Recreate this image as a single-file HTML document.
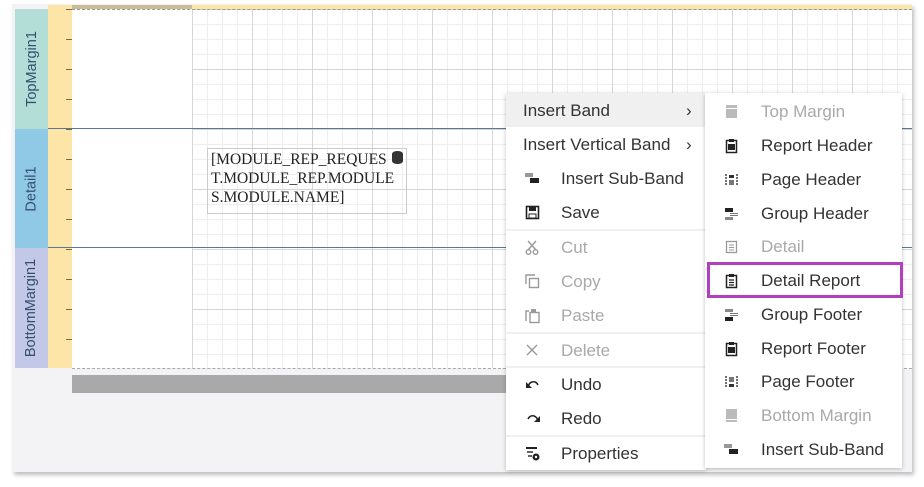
<!DOCTYPE html>
<html><head><meta charset="utf-8"><style>
*{margin:0;padding:0;box-sizing:border-box}
body{width:924px;height:487px;background:#fff;position:relative;overflow:hidden;font-family:"Liberation Sans",sans-serif}
.frame{position:absolute;left:12px;top:4px;width:900px;height:468px;background:#f3f3f5;box-shadow:2px 3px 4px rgba(0,0,0,.25)}
.abs{position:absolute}
.lbl{position:absolute;left:15px;width:33px;display:flex;align-items:center;justify-content:center}
.lbl span{transform:rotate(-90deg);white-space:nowrap;font-size:14.5px;color:#34506e}
.grid{left:192px;top:9px;width:720px;height:359px;background:#fff;
background-image:linear-gradient(to right,#d6d6d6 1px,transparent 1px),linear-gradient(to bottom,#d6d6d6 1px,transparent 1px),linear-gradient(to right,#eeeeee 1px,transparent 1px),linear-gradient(to bottom,#eeeeee 1px,transparent 1px);
background-size:60px 60px,60px 60px,15px 15px,15px 15px}
.ticks{left:66px;top:9px;width:6px;height:359px;background-image:linear-gradient(to bottom,#7a6a48 1px,transparent 1px);background-size:6px 30px}
.menu{position:absolute;background:#fff;box-shadow:0 1px 4px rgba(0,0,0,.25);font-size:17px;color:#333}
.it{position:absolute;left:0;right:0;height:34px;line-height:36px}
.it .t{position:absolute;top:0}
.it svg{position:absolute;top:10px}
.dis{color:#a9a9a9}
.sep{position:absolute;left:0;right:0;height:2px;background:#f0f0f0}
</style></head><body>
<div class="frame"></div>
<div class="abs" style="left:15px;top:9px;width:897px;height:359px;background:#fff"></div>
<div class="lbl" style="top:9px;height:120px;background:#b3ded8"><span>TopMargin1</span></div>
<div class="lbl" style="top:129px;height:119px;background:#8fc9e5"><span>Detail1</span></div>
<div class="lbl" style="top:248px;height:120px;background:#c3c8e8"><span>BottomMargin1</span></div>
<div class="abs" style="left:48px;top:9px;width:24px;height:359px;background:#fde5a8"></div>
<div class="abs ticks"></div>
<div class="abs" style="left:48px;top:5px;width:864px;height:4px;background:#fde5a8"></div>
<div class="abs" style="left:72px;top:5px;width:120px;height:4px;background:#c9bd98"></div>
<div class="abs grid"></div>
<div class="abs" style="left:48px;top:128px;width:864px;height:1px;background:#5a7896"></div>
<div class="abs" style="left:48px;top:247px;width:864px;height:1px;background:#5a7896"></div>
<div class="abs" style="left:72px;top:9px;width:840px;border-top:1px dashed #999"></div>
<div class="abs" style="left:72px;top:368px;width:840px;border-top:1px dashed #aaa"></div>
<div class="abs" style="left:72px;top:375px;width:440px;height:18px;background:#a9a9a9"></div>
<div class="abs" style="left:207px;top:148px;width:200px;height:66px;border:1px solid #ccc;font-family:'Liberation Serif',serif;font-size:15.5px;line-height:19px;padding:1px 3px;color:#222">[MODULE_REP_REQUES<br>T.MODULE_REP.MODULE<br>S.MODULE.NAME]</div>
<div class="abs" style="left:392px;top:151px;width:11px;height:13px;background:#333;border-radius:5px/3px"></div>

<div class="menu" style="left:506px;top:93px;width:200px;height:377px">
<div class="abs" style="left:0;top:0;width:200px;height:34px;background:#f0f0f0"></div>
<div class="it" style="top:0"><span class="t" style="left:17px">Insert Band</span><span class="t" style="left:180px">›</span></div>
<div class="it" style="top:34px"><span class="t" style="left:17px">Insert Vertical Band</span><span class="t" style="left:180px">›</span></div>
<div class="it" style="top:68px"><svg style="left:19px" width="16" height="14"><rect x="0" y="2" width="8" height="4" fill="#999"/><rect x="5" y="7" width="9" height="5" fill="#222"/></svg><span class="t" style="left:55px">Insert Sub-Band</span></div>
<div class="it" style="top:102px"><svg style="left:19px" width="16" height="16"><rect x="1.5" y="1.5" width="12" height="12" fill="none" stroke="#222" stroke-width="1.6"/><rect x="4" y="2" width="7" height="4" fill="#222"/><rect x="4" y="9" width="7" height="4" fill="none" stroke="#222"/></svg><span class="t" style="left:55px">Save</span></div>
<div class="sep" style="top:136px"></div>
<div class="it dis" style="top:137px"><svg style="left:19px" width="16" height="16"><path d="M3 1L11 10M11 1L3 10" stroke="#999" stroke-width="1.4"/><circle cx="3.5" cy="12" r="2.3" fill="none" stroke="#999" stroke-width="1.4"/><circle cx="10.5" cy="12" r="2.3" fill="none" stroke="#999" stroke-width="1.4"/></svg><span class="t" style="left:55px">Cut</span></div>
<div class="it dis" style="top:171px"><svg style="left:19px" width="16" height="16"><path d="M1 10V1h9" fill="none" stroke="#999" stroke-width="1.4"/><rect x="4.5" y="4.5" width="9" height="9" fill="none" stroke="#999" stroke-width="1.4"/></svg><span class="t" style="left:55px">Copy</span></div>
<div class="it dis" style="top:205px"><svg style="left:19px" width="16" height="16"><path d="M1 13V3h3" fill="none" stroke="#999" stroke-width="1.4"/><rect x="5" y="4.5" width="9" height="10" fill="none" stroke="#999" stroke-width="1.4"/><rect x="6" y="1" width="5" height="3" fill="#999"/></svg><span class="t" style="left:55px">Paste</span></div>
<div class="sep" style="top:239px"></div>
<div class="it dis" style="top:240px"><svg style="left:19px" width="16" height="16"><path d="M2 2L12 12M12 2L2 12" stroke="#999" stroke-width="1.4"/></svg><span class="t" style="left:55px">Delete</span></div>
<div class="sep" style="top:273px"></div>
<div class="it" style="top:274px"><svg style="left:19px" width="16" height="16"><path d="M3 9C6 3 11 4 13 8" fill="none" stroke="#222" stroke-width="1.6"/><path d="M1 5v6h6z" fill="#222"/></svg><span class="t" style="left:55px">Undo</span></div>
<div class="it" style="top:308px"><svg style="left:19px" width="16" height="16"><path d="M13 9C10 3 5 4 3 8" fill="none" stroke="#222" stroke-width="1.6"/><path d="M15 5v6h-6z" fill="#222"/></svg><span class="t" style="left:55px">Redo</span></div>
<div class="sep" style="top:342px"></div>
<div class="it" style="top:343px"><svg style="left:19px" width="16" height="16"><rect x="1" y="1" width="11" height="2" fill="#222"/><rect x="2" y="5" width="6" height="2" fill="#666"/><rect x="3" y="9" width="4" height="2" fill="#666"/><circle cx="11" cy="11" r="3.5" fill="#222"/><circle cx="11" cy="11" r="1.2" fill="#fff"/></svg><span class="t" style="left:55px">Properties</span></div>
</div>

<div class="menu" style="left:705px;top:93px;width:197px;height:375px">
<div class="it dis" style="top:1px"><svg style="left:19px" width="16" height="16"><rect x="2" y="1" width="11" height="13" fill="#bbb"/><rect x="2" y="4" width="11" height="1" fill="#fff"/></svg><span class="t" style="left:56px">Top Margin</span></div>
<div class="it" style="top:35px"><svg style="left:19px" width="16" height="16"><rect x="2.5" y="2.5" width="10" height="12" fill="none" stroke="#222" stroke-width="1.5"/><rect x="5" y="1" width="5" height="3" fill="#222"/><rect x="4" y="6" width="7" height="6" fill="#222"/></svg><span class="t" style="left:56px">Report Header</span></div>
<div class="it" style="top:69px"><svg style="left:19px" width="16" height="16"><path d="M2 2v12M13 2v12" stroke="#444" stroke-width="1.5" stroke-dasharray="2 1"/><rect x="5" y="3" width="5" height="3" fill="#333"/><rect x="5" y="8" width="5" height="5" fill="#777"/></svg><span class="t" style="left:56px">Page Header</span></div>
<div class="it" style="top:103px"><svg style="left:19px" width="16" height="16"><rect x="1" y="2" width="8" height="4" fill="#222"/><rect x="6" y="7" width="8" height="1" fill="#777"/><rect x="6" y="9" width="8" height="1" fill="#777"/><rect x="1" y="11" width="8" height="3" fill="#888"/></svg><span class="t" style="left:56px">Group Header</span></div>
<div class="it dis" style="top:136px"><svg style="left:19px" width="16" height="16"><rect x="2.5" y="2.5" width="10" height="11" fill="none" stroke="#999" stroke-width="1.3"/><path d="M5 6h5M5 8.5h5M5 11h5" stroke="#999"/></svg><span class="t" style="left:56px">Detail</span></div>
<div class="it" style="top:170px"><svg style="left:19px" width="16" height="16"><rect x="2.5" y="2.5" width="10" height="12" fill="none" stroke="#222" stroke-width="1.5"/><rect x="5" y="1" width="5" height="3" fill="#222"/><path d="M5 7h5M5 9.5h5M5 12h5" stroke="#222" stroke-width="1.2"/></svg><span class="t" style="left:56px">Detail Report</span></div>
<div class="it" style="top:204px"><svg style="left:19px" width="16" height="16"><rect x="1" y="2" width="8" height="3" fill="#888"/><rect x="6" y="6" width="8" height="1" fill="#777"/><rect x="6" y="8" width="8" height="1" fill="#777"/><rect x="1" y="10" width="8" height="4" fill="#222"/></svg><span class="t" style="left:56px">Group Footer</span></div>
<div class="it" style="top:238px"><svg style="left:19px" width="16" height="16"><rect x="2.5" y="2.5" width="10" height="12" fill="none" stroke="#222" stroke-width="1.5"/><rect x="5" y="1" width="5" height="3" fill="#222"/><rect x="4" y="6" width="7" height="6" fill="#222"/></svg><span class="t" style="left:56px">Report Footer</span></div>
<div class="it" style="top:271px"><svg style="left:19px" width="16" height="16"><path d="M2 2v12M13 2v12" stroke="#444" stroke-width="1.5" stroke-dasharray="2 1"/><rect x="5" y="3" width="5" height="5" fill="#777"/><rect x="5" y="10" width="5" height="3" fill="#333"/></svg><span class="t" style="left:56px">Page Footer</span></div>
<div class="it dis" style="top:305px"><svg style="left:19px" width="16" height="16"><rect x="2" y="1" width="11" height="13" fill="#bbb"/><rect x="2" y="11" width="11" height="1" fill="#fff"/></svg><span class="t" style="left:56px">Bottom Margin</span></div>
<div class="it" style="top:339px"><svg style="left:19px" width="16" height="16"><rect x="0" y="2" width="8" height="4" fill="#999"/><rect x="5" y="7" width="9" height="5" fill="#222"/></svg><span class="t" style="left:56px">Insert Sub-Band</span></div>
</div>
<div class="abs" style="left:707px;top:262px;width:196px;height:36px;border:3px solid #b13fbf"></div>
</body></html>
